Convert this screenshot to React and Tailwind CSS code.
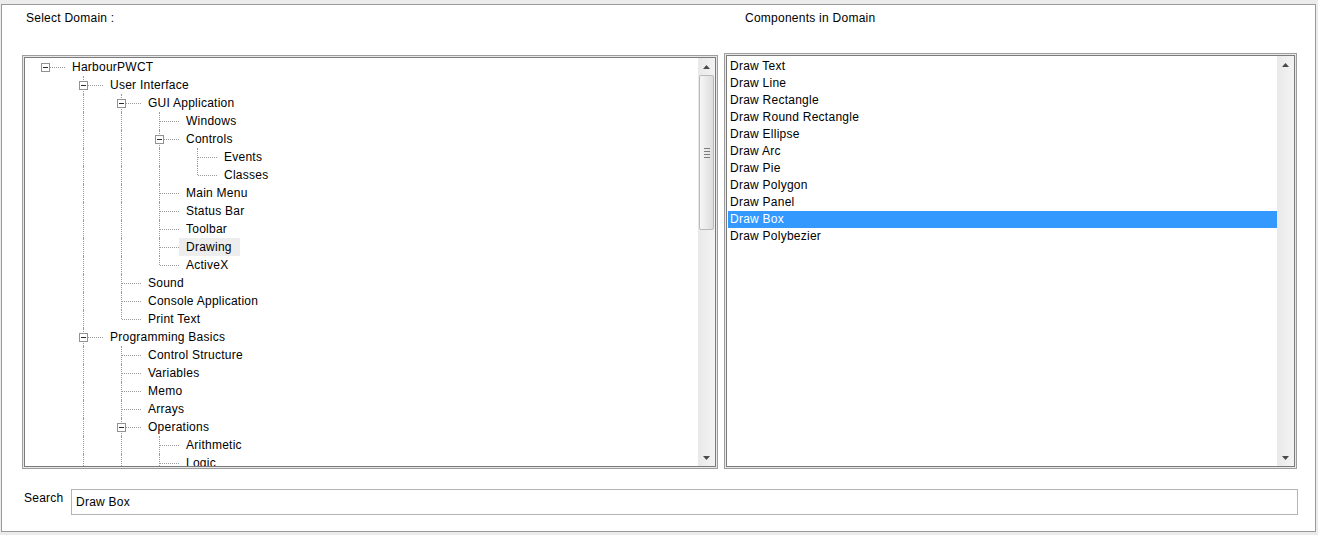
import React from 'react';

// "more" marks a node whose siblings continue below the visible area
const tree = [
  {
    t: 'HarbourPWCT',
    c: [
      {
        t: 'User Interface',
        c: [
          {
            t: 'GUI Application',
            c: [
              { t: 'Windows' },
              { t: 'Controls', c: [{ t: 'Events' }, { t: 'Classes' }] },
              { t: 'Main Menu' },
              { t: 'Status Bar' },
              { t: 'Toolbar' },
              { t: 'Drawing', hot: true },
              { t: 'ActiveX' },
            ],
          },
          { t: 'Sound' },
          { t: 'Console Application' },
          { t: 'Print Text' },
        ],
      },
      {
        t: 'Programming Basics',
        more: true,
        c: [
          { t: 'Control Structure' },
          { t: 'Variables' },
          { t: 'Memo' },
          { t: 'Arrays' },
          { t: 'Operations', more: true, c: [{ t: 'Arithmetic' }, { t: 'Logic', more: true }] },
        ],
      },
    ],
  },
];

const components = [
  'Draw Text',
  'Draw Line',
  'Draw Rectangle',
  'Draw Round Rectangle',
  'Draw Ellipse',
  'Draw Arc',
  'Draw Pie',
  'Draw Polygon',
  'Draw Panel',
  'Draw Box',
  'Draw Polybezier',
];

// flatten the tree, keeping track of which guide columns continue
function flatten(nodes, level, guides, out) {
  nodes.forEach((n, i) => {
    const first = i === 0;
    const last = i === nodes.length - 1 && !n.more;
    out.push({
      ...n,
      level,
      guides,
      top: level > 0 || !first,
      bottom: !last,
    });
    if (n.c) flatten(n.c, level + 1, [...guides, !last], out);
  });
  return out;
}

const rows = flatten(tree, 0, [], []);

function TreeRow({ row }) {
  return (
    <div className="flex h-[18px] shrink-0">
      {row.guides.map((g, i) => (
        <div key={i} className="w-[38px] shrink-0">
          {g && <div className="ml-[19px] h-full border-l border-dotted border-[#9a9a9a]" />}
        </div>
      ))}
      <div className="grid w-[39px] shrink-0 grid-cols-[39px] grid-rows-[18px]">
        {row.top && (
          <div
            className={`col-start-1 row-start-1 ml-[19px] self-start border-l border-dotted border-[#9a9a9a] ${
              row.bottom ? 'h-[18px]' : 'h-[9px]'
            }`}
          />
        )}
        <div className="col-start-1 row-start-1 ml-[20px] w-[19px] self-center border-t border-dotted border-[#9a9a9a]" />
        {row.c && (
          <div className="col-start-1 row-start-1 ml-[15px] flex h-[9px] w-[9px] items-center justify-center self-center border border-[#929292] bg-white">
            <div className="h-px w-[5px] bg-[#2a2a2a]" />
          </div>
        )}
      </div>
      <div
        className={`flex items-center whitespace-nowrap pl-[7px] pr-[8px] ${row.hot ? 'bg-[#ededed]' : ''}`}
      >
        {row.t}
      </div>
    </div>
  );
}

function Arrow({ up }) {
  return (
    <div className="flex h-[17px] shrink-0 items-center justify-center">
      <svg width="7" height="4" viewBox="0 0 7 4">
        {up ? <path d="M0 4h7L3.5 0z" fill="#4a4a4a" /> : <path d="M0 0h7L3.5 4z" fill="#4a4a4a" />}
      </svg>
    </div>
  );
}

function ScrollBar({ thumb }) {
  return (
    <div className="flex w-[17px] shrink-0 flex-col bg-linear-to-r from-[#e9e9e9] to-[#f3f3f3]">
      <Arrow up />
      <div className="flex flex-1 flex-col">
        {thumb && (
          <div className="mx-px flex h-[155px] flex-col items-center justify-center gap-[2px] rounded-[2px] border border-[#b9b9b9] bg-linear-to-r from-[#f6f6f6] to-[#dddddd]">
            <div className="h-px w-[6px] bg-[#7d7d7d]" />
            <div className="h-px w-[6px] bg-[#7d7d7d]" />
            <div className="h-px w-[6px] bg-[#7d7d7d]" />
            <div className="h-px w-[6px] bg-[#7d7d7d]" />
          </div>
        )}
      </div>
      <Arrow />
    </div>
  );
}

function Sunken({ className, children }) {
  return (
    <div className={`flex border border-[#9d9d9d] bg-[#e8e8e8] p-px ${className}`}>
      <div className="flex flex-1 overflow-hidden border border-[#7b7b7b] bg-white">{children}</div>
    </div>
  );
}

export default function App() {
  return (
    <div className="h-[535px] w-[1318px] overflow-hidden bg-[#ececec] pt-[4px] font-['Liberation_Sans',Arial,sans-serif] text-[12px] leading-[14px] tracking-[0.25px] text-black">
      <div className="ml-px mr-[2px] flex h-[528px] flex-col border border-[#9a9a9a] bg-white">
        <div className="grid grid-cols-[696px_573px] gap-x-[6px] pl-[20px]">
          <div className="flex flex-col">
            <div className="h-[48px] pl-[4px] pt-[6px]">Select Domain :</div>
            <Sunken className="mt-[2px] h-[414px]">
              <div className="flex flex-1 flex-col overflow-hidden pl-px">
                {rows.map((r, i) => (
                  <TreeRow key={i} row={r} />
                ))}
              </div>
              <ScrollBar thumb />
            </Sunken>
          </div>
          <div className="flex flex-col">
            <div className="h-[48px] pl-[21px] pt-[6px]">Components in Domain</div>
            <Sunken className="h-[416px]">
              <div className="flex flex-1 flex-col pl-px pt-[2px]">
                {components.map((c) => (
                  <div
                    key={c}
                    className={`h-[17px] shrink-0 pl-[2px] leading-[17px] ${
                      c === 'Draw Box' ? 'bg-[#3399ff] text-white' : ''
                    }`}
                  >
                    {c}
                  </div>
                ))}
              </div>
              <ScrollBar />
            </Sunken>
          </div>
        </div>
        <div className="mt-[20px] flex items-start pl-[22px] pr-[17px]">
          <div className="w-[47px] pt-[2px]">Search</div>
          <div className="flex h-[26px] flex-1 items-center border border-[#b4b4b4] pl-[4px]">Draw Box</div>
        </div>
      </div>
    </div>
  );
}
